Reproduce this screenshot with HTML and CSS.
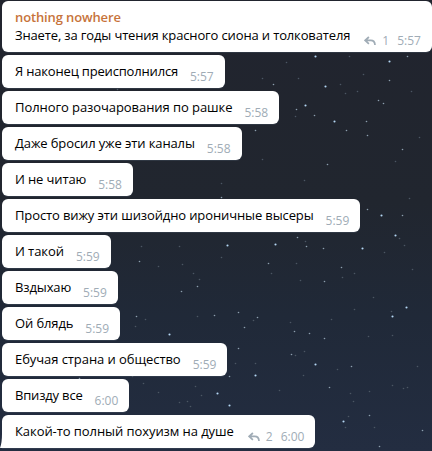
FILE: index.html
```
<!DOCTYPE html>
<html lang="ru">

<head>
    <meta charset="UTF-8">
    <meta name="viewport" content="width=device-width, initial-scale=1.0">
    <title>nothing nowhere</title>
    <link rel="stylesheet" href="styles.css">
</head>

<body>
    <svg class="sky" id="sky" width="432" height="451" aria-hidden="true"></svg>

    <main class="chat">
        <div class="message first">
            <div class="author">nothing nowhere</div>
            <div class="row">
                <p>Знаете, за годы чтения красного сиона и толкователя</p>
                <div class="info">
                    <svg class="reply" viewBox="0 0 12 10"><path d="M4.9 1 L1.2 4.4 L4.9 7.8 M1.5 4.4 H6.8 Q10.8 4.4 11 9"/></svg>
                    <span class="count">1</span>
                    <time>5:57</time>
                </div>
            </div>
        </div>
        <div class="message row tight"><p>Я наконец преисполнился</p><time>5:57</time></div>
        <div class="message row loose"><p>Полного разочарования по рашке</p><time>5:58</time></div>
        <div class="message row"><p>Даже бросил уже эти каналы</p><time>5:58</time></div>
        <div class="message row"><p>И не читаю</p><time>5:58</time></div>
        <div class="message row"><p>Просто вижу эти шизойдно ироничные высеры</p><time>5:59</time></div>
        <div class="message row loose"><p>И такой</p><time>5:59</time></div>
        <div class="message row"><p>Вздыхаю</p><time>5:59</time></div>
        <div class="message row"><p>Ой блядь</p><time>5:59</time></div>
        <div class="message row loose"><p>Ебучая страна и общество</p><time>5:59</time></div>
        <div class="message row tight"><p>Впизду все</p><time>6:00</time></div>
        <div class="message row loose last">
            <svg class="tail" viewBox="0 0 8 14"><path d="M2 0 Q2 9 0 14 H8 V0 Z"/></svg>
            <p>Какой-то полный похуизм на душе</p>
            <div class="info">
                <svg class="reply" viewBox="0 0 12 10"><path d="M4.9 1 L1.2 4.4 L4.9 7.8 M1.5 4.4 H6.8 Q10.8 4.4 11 9"/></svg>
                <span class="count">2</span>
                <time>6:00</time>
            </div>
        </div>
    </main>

    <script>
        // x, y of every star, grouped by brightness
        const stars = {
            bright: [
                [315, 56], [389, 61], [325, 86], [305, 105], [334, 121], [381, 215], [395, 235],
                [275, 244], [169, 334], [406, 307], [392, 316], [315, 364], [255, 375], [217, 393],
                [229, 405], [343, 421], [362, 248], [227, 245]
            ],
            medium: [
                [407, 56], [273, 84], [389, 80], [378, 100], [383, 103], [296, 109], [314, 115],
                [366, 121], [255, 130], [346, 130], [367, 135], [402, 149], [327, 164], [221, 197],
                [367, 209], [402, 215], [297, 237], [139, 261], [197, 286], [181, 291], [136, 316],
                [306, 246], [323, 248], [268, 263], [341, 267], [324, 281], [238, 312], [257, 317],
                [244, 327], [294, 331], [309, 333], [324, 338], [238, 348], [291, 354], [351, 366],
                [229, 376], [329, 387], [369, 415], [422, 430], [379, 446], [214, 315], [79, 378]
            ],
            dim: [
                [286, 62], [349, 56], [411, 91], [357, 91], [345, 93], [295, 116], [298, 78],
                [363, 74], [340, 84], [262, 78], [395, 161], [262, 159], [221, 183], [304, 180],
                [409, 198], [399, 238], [419, 137], [141, 246], [179, 246], [158, 266], [182, 264],
                [193, 273], [199, 279], [145, 319], [135, 326], [197, 316], [305, 241], [384, 252],
                [221, 257], [296, 263], [342, 277], [354, 273], [300, 280], [271, 273], [391, 311],
                [354, 309], [253, 320], [290, 322], [368, 336], [392, 335], [304, 351], [295, 355],
                [331, 319], [373, 297], [404, 245], [412, 269], [337, 369], [255, 363], [235, 363],
                [303, 375], [279, 390], [350, 393], [353, 401], [369, 391], [392, 385], [403, 388],
                [407, 387], [417, 366], [348, 416], [345, 427], [374, 427], [195, 386], [201, 395],
                [190, 406], [187, 401], [179, 402], [132, 376], [143, 383], [158, 392], [117, 89]
            ]
        };
        const sky = document.getElementById('sky');

        for (const group in stars) {
            stars[group].forEach(([x, y]) => {
                const star = document.createElementNS('http://www.w3.org/2000/svg', 'circle');
                star.setAttribute('class', group);
                star.setAttribute('cx', x + 0.5);
                star.setAttribute('cy', y + 0.5);
                star.setAttribute('r', group === 'bright' ? 1.05 : 0.8);
                sky.appendChild(star);
            });
        }
    </script>
</body>

</html>
```
FILE: styles.css
```
* {
    margin: 0;
    padding: 0;
    box-sizing: border-box;
}

body {
    height: 451px;
    overflow: hidden;
    background: linear-gradient(#21242e, #21262f 45%, #202938 70%, #232d41);
    font-family: 'Open Sans', sans-serif;
    font-size: 13px;
    color: #000;
}

.sky {
    position: absolute;
    top: 0;
    left: 0;
}

.bright {
    fill: #b5d8f5;
}

.medium {
    fill: #8c9eae;
}

.dim {
    fill: #4c5663;
}

.chat {
    position: relative;
    display: flex;
    flex-direction: column;
    align-items: flex-start;
    gap: 3px;
    padding: 1px 0 0 2px;
}

.message {
    height: 33px;
    padding: 7px 11px 0 13px;
    background-color: #fff;
    border-radius: 6px;
    box-shadow: 0 1px 0 rgba(70, 82, 98, 0.4);
    white-space: nowrap;
}

.first {
    height: 51px;
}

.author {
    height: 18px;
    line-height: 18px;
    font-weight: 600;
    letter-spacing: -0.13px;
    color: #c7733a;
}

.row {
    display: flex;
    align-items: flex-start;
    gap: 12px;
}

.row p {
    line-height: 18px;
    letter-spacing: -0.12px;
}

.first p {
    letter-spacing: -0.14px;
}

.tight p {
    letter-spacing: -0.18px;
}

.loose p {
    letter-spacing: -0.07px;
}

time,
.count {
    margin-top: 6px;
    font-size: 12px;
    line-height: 18px;
    color: #a0acb6;
}

.info {
    display: flex;
    align-items: flex-start;
}

.info .count {
    margin-left: 6px;
    margin-right: 8px;
}

.reply {
    width: 12px;
    height: 10px;
    margin: 10px 0 0 2px;
    fill: none;
    stroke: #a0acb6;
    stroke-width: 1.7;
}

.last {
    position: relative;
    border-bottom-left-radius: 0;
}

.tail {
    position: absolute;
    left: -2px;
    bottom: 0;
    width: 8px;
    height: 14px;
    fill: #fff;
}
```
